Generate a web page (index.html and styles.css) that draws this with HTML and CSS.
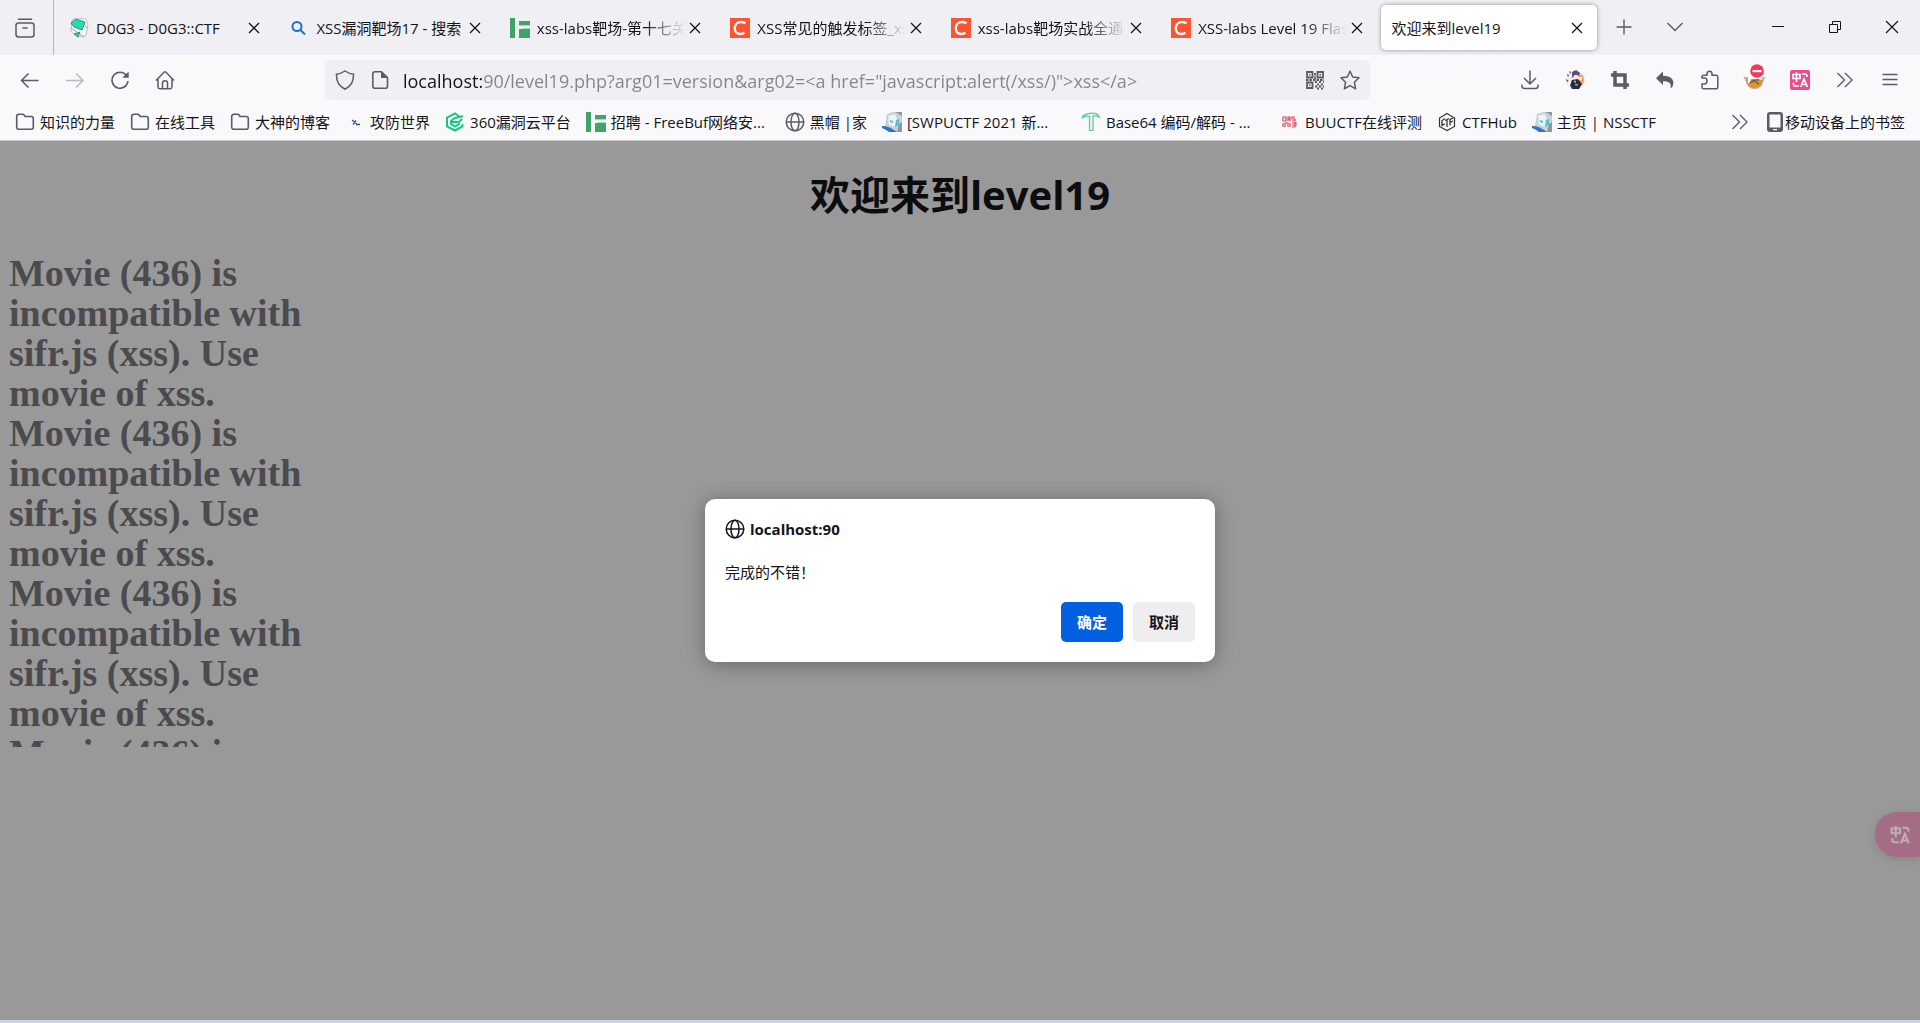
FILE: index.html
```html
<!DOCTYPE html>
<html lang="zh-CN">
<head>
<meta charset="utf-8">
<title>欢迎来到level19</title>
<link rel="stylesheet" href="styles.css">
</head>
<body>
<svg class="defs" aria-hidden="true">
  <symbol id="x" viewBox="0 0 20 20"><path d="M5 5l10 10M15 5L5 15" fill="none" stroke="currentColor" stroke-width="1.300"/></symbol>
  <symbol id="folder" viewBox="0 0 20 20"><path d="M1.700 15V4.500Q1.700 2.200 4 2.200h3.500q1 0 1.600.8l1 1.500h6q2.200 0 2.200 2.200V15q0 2.300-2.200 2.300H4q-2.300 0-2.300-2.300z" fill="none" stroke="currentColor" stroke-width="1.600"/></symbol>
  <symbol id="globe" viewBox="0 0 20 20"><g fill="none" stroke="currentColor" stroke-width="1.500"><circle cx="10" cy="10" r="8.800"/><ellipse cx="10" cy="10" rx="4" ry="8.800"/><path d="M1.500 10h17"/></g></symbol>
  <symbol id="csdn" viewBox="0 0 20 20"><path fill="#fc5531" d="M0 0h20v20H0z"/><path d="M15.500 5.300Q13.500 4 11 4C7 4 4.800 7 4.800 10.500c0 3.500 2.300 5.500 5.400 5.500q2.600 0 4.300-1.200" fill="none" stroke="#fff" stroke-width="2.300"/></symbol>
  <symbol id="freebuf" viewBox="0 0 20 20"><path fill="#40a368" d="M0 0h5v20H0zM9 3h11v4H9zM9 11h11v9H9z"/><path fill="#a9d5bb" d="M9 7h11v1H9zM12 10h8v1h-8z"/></symbol>
  <symbol id="nss" viewBox="0 0 20 20"><path fill="#c7d1d5" d="M5 2l6-2h9v20H9L3 14z"/><path fill="#8c989f" d="M13 0h7v4l-3-2zM17 12l3-2v10h-5z"/><path fill="#edf3f4" d="M6 4l7-2 2 5-2 8-6-2z"/><path fill="#4dc3d3" d="M8 8l3 1v2l-3-1zM14 8l3-1v6l-4 2z"/><path fill="#2c75cf" d="M0 14q6-1 15 6H7q-4-3-7-4z"/></symbol>
  <symbol id="chevrons" viewBox="0 0 20 20"><path d="M2.500 3l7 7-7 7M10 3l7 7-7 7" fill="none" stroke="currentColor" stroke-width="1.400"/></symbol>
  <symbol id="translate" viewBox="0 0 20 20"><g fill="none" stroke="currentColor" stroke-width="1.700"><path d="M3 4.500h7v4H3zM6.500 2.500V12M12 4h3q2 0 2 3M3.500 12.500v1.500q0 2 2 2H9M10.700 17L14 9l3.300 8M11.500 14.500h5"/></g></symbol>
</svg>

<header class="chrome">
  <div class="tabbar">
    <button class="view" aria-label="Firefox View"><svg viewBox="0 0 20 20"><g fill="none" stroke="currentColor" stroke-width="1.500" stroke-linecap="round"><rect x="1" y="5" width="18" height="14" rx="2.500"/><path d="M3.500 1.200h13M8 10h4"/></g></svg></button>
    <div class="tabs">
      <div class="tab"><svg class="icon" viewBox="0 0 20 20"><path d="M3 2l5-2 9 1 2 5-2 12-8 1-7-6z" fill="#f6f6f6" stroke="#aaa" stroke-width=".7"/><path fill="#1fe0b0" stroke="#176b58" stroke-width=".7" d="M2 5l5-4 9 3-3 8-8-3zM5 16l6-2-2 5z"/><path d="M2 10l13 9M15 6l3 4" stroke="#888" stroke-width=".7"/></svg><span class="label">D0G3 - D0G3::CTF</span><button class="close" aria-label="关闭"><svg><use href="#x"/></svg></button></div>
      <div class="tab"><svg class="icon" viewBox="0 0 20 20"><g fill="none" stroke="#1874c9" stroke-width="2"><circle cx="8" cy="8.500" r="4.500"/><path d="M11.500 12l4.500 4.500"/></g></svg><span class="label">XSS漏洞靶场17 - 搜索</span><button class="close" aria-label="关闭"><svg><use href="#x"/></svg></button></div>
      <div class="tab"><svg class="icon"><use href="#freebuf"/></svg><span class="label cut">xss-labs靶场-第十七关</span><button class="close" aria-label="关闭"><svg><use href="#x"/></svg></button></div>
      <div class="tab"><svg class="icon"><use href="#csdn"/></svg><span class="label cut">XSS常见的触发标签_xss</span><button class="close" aria-label="关闭"><svg><use href="#x"/></svg></button></div>
      <div class="tab"><svg class="icon"><use href="#csdn"/></svg><span class="label cut">xss-labs靶场实战全通关</span><button class="close" aria-label="关闭"><svg><use href="#x"/></svg></button></div>
      <div class="tab"><svg class="icon"><use href="#csdn"/></svg><span class="label cut">XSS-labs Level 19 Flash</span><button class="close" aria-label="关闭"><svg><use href="#x"/></svg></button></div>
      <div class="tab active"><span class="label">欢迎来到level19</span><button class="close" aria-label="关闭"><svg><use href="#x"/></svg></button></div>
    </div>
    <div class="tabtools">
      <button aria-label="新建标签页"><svg viewBox="0 0 20 20"><path d="M10 2.500v15M2.500 10h15" stroke="currentColor" stroke-width="1.400"/></svg></button>
      <button aria-label="列出所有标签页"><svg viewBox="0 0 20 20"><path d="M2.500 6l7.500 7.500L17.500 6" fill="none" stroke="currentColor" stroke-width="1.400"/></svg></button>
    </div>
    <div class="window">
      <button aria-label="最小化"><svg viewBox="0 0 20 20"><path d="M4 9.500h12" stroke="currentColor"/></svg></button>
      <button aria-label="还原"><svg viewBox="0 0 20 20"><path d="M4.500 7.500h8v8h-8zM7.500 7V4.500h8v8H13" fill="none" stroke="currentColor"/></svg></button>
      <button aria-label="关闭窗口"><svg viewBox="0 0 20 20"><path d="M4 4l12 12M16 4L4 16" stroke="currentColor" stroke-width="1.200"/></svg></button>
    </div>
  </div>

  <div class="toolbar">
    <nav class="tools">
      <button aria-label="后退"><svg viewBox="0 0 20 20"><path d="M18.500 10.500h-17M8.500 3.500l-7 7 7 7" fill="none" stroke="currentColor" stroke-width="1.500"/></svg></button>
      <button aria-label="前进" disabled><svg viewBox="0 0 20 20"><path d="M1 10.500h17M11 3.500l7 7-7 7" fill="none" stroke="currentColor" stroke-width="1.500"/></svg></button>
      <button aria-label="刷新"><svg viewBox="0 0 20 20"><path d="M16.500 5.500A8 8 0 1 0 18 11" fill="none" stroke="currentColor" stroke-width="1.600"/><path d="M18.700 1.500v6.300h-6.300z" fill="currentColor"/></svg></button>
      <button aria-label="主页"><svg viewBox="0 0 20 20"><path d="M1 10.500l8-8.300q1-.9 2 0l8 8.300M3 9v8q0 1.700 1.700 1.700h10.600Q17 18.700 17 17V9M7.500 18.500V13q0-2.300 2.500-2.300t2.500 2.300v5.500" fill="none" stroke="currentColor" stroke-width="1.500"/></svg></button>
    </nav>
    <div class="address">
      <button aria-label="跟踪保护"><svg viewBox="0 0 20 20"><path d="M10 1q4 2.700 8.500 3.200Q19 15 10 19.200 1 15 1.500 4.200 6 3.700 10 1z" fill="none" stroke="currentColor" stroke-width="1.500"/></svg></button>
      <button aria-label="网站信息"><svg viewBox="0 0 20 20"><path d="M2.800 4Q2.800 1.700 5 1.700h6.500l6 6V16q0 2.300-2.200 2.300H5Q2.800 18.300 2.800 16z" fill="none" stroke="currentColor" stroke-width="1.600"/><path d="M11 1.700V8h6.500z" fill="currentColor"/></svg></button>
      <input class="url" type="text" aria-label="网址" value="localhost:90/level19.php?arg01=version&amp;arg02=&lt;a href=&quot;javascript:alert(/xss/)&quot;&gt;xss&lt;/a&gt;">
      <button aria-label="二维码"><svg viewBox="0 0 20 20"><g fill="none" stroke="currentColor" stroke-width="1.800"><path d="M2 2h5.500v5.500H2zM12.500 2H18v5.500h-5.500zM2 12.500h5.500V18H2z"/><path d="M10 3v6M1 10h18" stroke-dasharray="2.500 1"/><path d="M10 12h9M12 14.500h7M10 16.500h9M12 18.500h7" stroke-dasharray="2 2"/></g><path fill="currentColor" d="M4 4h1.500v1.500H4zM14.500 4H16v1.500h-1.500zM4 14.500h1.500V16H4z"/></svg></button>
      <button aria-label="添加书签"><svg viewBox="0 0 20 20"><path d="M10 1.200l2.700 5.800 6.300.8-4.600 4.400 1.200 6.600-5.600-3.200-5.600 3.200 1.200-6.600L1 7.800l6.300-.8z" fill="none" stroke="currentColor" stroke-width="1.500" stroke-linejoin="round"/></svg></button>
    </div>
    <div class="tools">
      <button aria-label="下载"><svg viewBox="0 0 20 20"><path d="M10 .5v13M4 8l6 6 6-6M2 14.500V16q0 2.500 2.500 2.500h11Q18 18.500 18 16v-1.500" fill="none" stroke="currentColor" stroke-width="1.500"/></svg></button>
      <button aria-label="账户"><svg viewBox="0 0 20 20"><circle cx="10" cy="10" r="9.500" fill="#f1e9e8"/><path fill="#5d4d83" d="M7 2l4-2 4 3v4l-3-2-3 1-2 2z"/><path fill="#f0a861" d="M14 4l4 1 1.500 6-3 5-2-4z"/><path fill="#ffe1d2" d="M9 5h4v4H9zM14 7h3v3h-3z"/><path fill="#272a46" d="M7 10l6-1 4 5-3 5H7l-2-4z"/><path fill="#555" d="M2 4l2 1-1 2zM4 1l2 1-1 2zM1 9l3 2-2 1z"/><path fill="#fff" d="M3 11l3 2-2 3zM10 10l1 3-2-1z"/><path fill="#d39b4d" d="M10 14h3v1.500h-3z"/></svg></button>
      <button aria-label="截图"><svg viewBox="0 0 20 20"><path d="M5 1v14h14M1 5h14v14" fill="none" stroke="currentColor" stroke-width="3.500"/></svg></button>
      <button aria-label="撤销"><svg viewBox="0 0 20 20"><path d="M8 1.500v4.300c8 0 11.500 4 10 9.500-.4 1.500-1.500 2.500-2.500 3 1.200-4.500-1-7-7.500-7V15L1 8.200z" fill="currentColor"/></svg></button>
      <button aria-label="扩展"><svg viewBox="0 0 20 20"><path d="M2 8V6.800Q2 5.300 3.500 5.300H7V4q0-2.700 2.500-2.700T12 4v1.300h4q1.800 0 1.800 1.800V17q0 1.800-1.800 1.800H3.500Q2 18.800 2 17v-3h2.500Q7 14 7 11T4.500 8z" fill="none" stroke="currentColor" stroke-width="1.500"/></svg></button>
      <button aria-label="脚本管理"><svg class="wide" viewBox="0 0 24 26"><path fill="#fff" stroke="#c8b09a" d="M1 13l5 1v3H3zM22 13l-4 1v3h2z"/><path fill="#e7912d" stroke="#b3a59b" d="M3 14h17q0 10.500-8.500 10.500T3 14z"/><path fill="#fff" d="M3 0h21v13H3z"/><path fill="#fff" d="M5 13h14v3l-3-1-8 1-3 4z"/><path d="M7 19l4-2 5 3M8 16h8" fill="none" stroke="#454545"/><circle cx="14" cy="7" r="6.800" fill="#f7365c"/><path fill="#fff" d="M9.500 6h9v2.200h-9z"/></svg></button>
      <button aria-label="翻译"><svg class="pink" viewBox="0 0 20 20"><use href="#translate"/></svg></button>
      <button aria-label="更多工具"><svg><use href="#chevrons"/></svg></button>
      <button aria-label="菜单"><svg viewBox="0 0 20 20"><path d="M2.500 4.500h15M2.500 9.500h15M2.500 14.500h15" stroke="currentColor" stroke-width="1.300"/></svg></button>
    </div>
  </div>

  <nav class="bookmarks">
    <a href="#"><svg><use href="#folder"/></svg><span>知识的力量</span></a>
    <a href="#"><svg><use href="#folder"/></svg><span>在线工具</span></a>
    <a href="#"><svg><use href="#folder"/></svg><span>大神的博客</span></a>
    <a href="#"><svg viewBox="0 0 20 20"><path d="M7 8l6 5M8 12.500l3-4M11 12.500h4" stroke="#31518f" stroke-width="1.300"/></svg><span>攻防世界</span></a>
    <a href="#"><svg viewBox="0 0 20 20"><g fill="none" stroke="#18c784" stroke-width="2"><path d="M18 4l-3 1-5-3.500L2 5.500v9l8 4 7.500-4V12M15 5l-5 1-4 3v3l4 2.500 5-3M7 10h7l3-3"/></g></svg><span>360漏洞云平台</span></a>
    <a href="#" class="long"><svg><use href="#freebuf"/></svg><span>招聘 - FreeBuf网络安...</span></a>
    <a href="#"><svg><use href="#globe"/></svg><span>黑帽 |家</span></a>
    <a href="#" class="long"><svg><use href="#nss"/></svg><span>[SWPUCTF 2021 新...</span></a>
    <a href="#" class="long"><svg viewBox="0 0 20 20"><path d="M1.500 4Q6 .8 13 1.200q4 .5 5.500 4Q15 3.500 12 4v14.500H8.500V4.500Q4 3.500 1.500 6z" fill="#e5f7ef" stroke="#64c6a0" stroke-width="1.200"/></svg><span>Base64 编码/解码 - ...</span></a>
    <a href="#"><svg viewBox="0 0 20 20"><path d="M3 9V5h3v4H3M8 9V5h2v4M8 7h2M15 5h-3v2h3v2h-3M3 11v4M5 15v-4h3v4M10 11v4M12 11h5M12 13h5M12 15h3M15 10v5" fill="none" stroke="#d94761" stroke-width="1.200"/></svg><span>BUUCTF在线评测</span></a>
    <a href="#"><svg viewBox="0 0 20 20"><path d="M10 1.500L17.500 6v8.500L10 18.500 2.500 14.500V6z" fill="none" stroke="#333" stroke-width="1.200"/><path d="M8 6.500L5 8.500v5l3-1.500M8 8.500l4-2M10 8v7M16 6l-3 1.500v6M13 10.500l3-1.500" fill="none" stroke="#333" stroke-width="1.300"/></svg><span>CTFHub</span></a>
    <a href="#"><svg><use href="#nss"/></svg><span>主页 | NSSCTF</span></a>
    <button class="more" aria-label="更多书签"><svg><use href="#chevrons"/></svg></button>
    <a href="#" class="mobile"><svg viewBox="0 0 20 20"><path fill="#5b5b66" fill-rule="evenodd" d="M5 0h10q3 0 3 3v14q0 3-3 3H5q-3 0-3-3V3q0-3 3-3zM4.500 2.500v13h11v-13zM8 17v1.200h4V17z"/></svg><span>移动设备上的书签</span></a>
  </nav>
</header>

<main class="page">
  <h1>欢迎来到level19</h1>
  <section class="movie">
    <p>Movie (436) is incompatible with sifr.js (xss). Use movie of xss.</p>
    <p>Movie (436) is incompatible with sifr.js (xss). Use movie of xss.</p>
    <p>Movie (436) is incompatible with sifr.js (xss). Use movie of xss.</p>
    <p>Movie (436) is</p>
  </section>
  <button class="float" aria-label="翻译此页"><svg><use href="#translate"/></svg></button>
  <div class="overlay">
    <section class="alert" role="alertdialog" aria-labelledby="origin" aria-describedby="message">
      <h2 id="origin"><svg><use href="#globe"/></svg>localhost:90</h2>
      <p id="message">完成的不错！</p>
      <div class="actions"><button class="primary">确定</button><button>取消</button></div>
    </section>
  </div>
</main>
</body>
</html>
```
FILE: styles.css
```css
* { box-sizing: border-box; }
body {
  margin: 0;
  min-height: 100vh;
  display: flex;
  flex-direction: column;
  font: 15px/20px "Open Sans", "Noto Sans CJK SC", sans-serif;
  color: #15141a;
  background: #f9f9fb;
}
.defs { position: absolute; width: 0; height: 0; }
svg { display: block; flex: none; width: 20px; height: 20px; }
button { padding: 0; border: 0; background: none; color: #5b5b66; font: inherit; display: flex; align-items: center; justify-content: center; }

.tabbar { display: flex; height: 55px; padding-bottom: 1px; background: #f0eff4; }
.view { width: 54px; height: 55px; padding-right: 3px; border-right: 1px solid #b5b4ba; }
.tabs { flex: 1; display: grid; grid-template-columns: repeat(7, 1fr); padding-left: 2px; }
.tab { display: flex; align-items: center; min-width: 0; margin: 5px 3px 4px 1px; padding: 0 9px 0 12px; border-radius: 5px; }
.tab .icon { margin-right: 7px; }
.tab .label { flex: 1; min-width: 0; overflow: hidden; white-space: nowrap; }
.tab .cut { mask-image: linear-gradient(to left, transparent, #000 40px); }
.tab .close { width: 20px; height: 20px; color: #15141a; }
.tab.active { margin: 5px 2px 4px; padding: 0 10px 0 11px; background: #fff; box-shadow: 0 0 4px #0006; }
.tabtools { display: flex; width: 102px; margin-left: -1px; }
.tabtools button { width: 51px; }
.window { display: flex; width: 220px; padding-left: 49px; }
.window button { flex: 1; color: #15141a; }

.toolbar { display: flex; align-items: center; height: 50px; padding: 0 8px 0 7px; }
.tools { display: flex; }
.tools button { width: 45px; height: 40px; }
.tools button:disabled { opacity: .4; }
.tools .wide { width: 24px; height: 26px; margin-bottom: 6px; }
.tools .pink { color: #fff; background: #ec4b8c; border-radius: 2px; }
.address { flex: 1; display: flex; align-items: center; height: 40px; margin: 0 137px 0 138px; padding: 0 3px 0 2px; border-radius: 5px; background: #f0eff4; }
.address button { width: 35px; height: 40px; }
.url {
  flex: 1; min-width: 0; height: 32px; padding: 2px 0 0 6px; border: 0; outline: 0;
  font: 18px/30px "Open Sans", sans-serif;
  color: #85848b;
  background: linear-gradient(to right, #15141a 86px, #85848b 86px);
  background-clip: text;
  -webkit-text-fill-color: transparent;
}

.bookmarks { display: flex; align-items: center; gap: 15px; height: 36px; padding: 0 15px 1px; border-bottom: 1px solid #cccccf; }
.bookmarks a { display: flex; align-items: center; gap: 5px; white-space: nowrap; color: inherit; text-decoration: none; }
.bookmarks svg { color: #5b5b66; }
.bookmarks .long { width: 184px; }
.bookmarks .more { margin-left: auto; }
.bookmarks .mobile { gap: 0; }

.page { position: relative; flex: 1; overflow: hidden; background: #99999a; border-bottom: 3px solid #ced3e2; }
.page h1 { margin: 26px 8px 30px; font-size: 40px; line-height: 56px; text-align: center; color: #0d0d10; }
.movie { height: 494px; width: 310px; margin-left: 9px; overflow: hidden; font: bold 38px/40px "Liberation Serif", serif; color: #4b4b4d; }
.movie p { margin: 0; }
.float { position: absolute; right: 0; top: 671px; width: 45px; height: 45px; padding-left: 4px; border-radius: 23px 0 0 23px; background: #a56c86; color: #c0aeb6; box-shadow: 0 2px 10px #0002; }
.float svg { width: 24px; height: 24px; }
.overlay { position: absolute; inset: 0; display: grid; place-items: center; }
.alert { width: 510px; padding: 20px; border-radius: 10px; background: #fff; box-shadow: 0 2px 20px #0005; }
.alert h2 { display: flex; align-items: center; gap: 5px; margin: 0; font-size: 15px; line-height: 20px; }
.alert p { margin: 23px 0 20px; line-height: 20px; }
.actions { display: flex; justify-content: flex-end; gap: 10px; }
.actions button { width: 62px; height: 40px; border-radius: 5px; background: #eeeeef; color: #15141a; font-weight: bold; }
.actions .primary { background: #0060df; color: #fff; }
```
